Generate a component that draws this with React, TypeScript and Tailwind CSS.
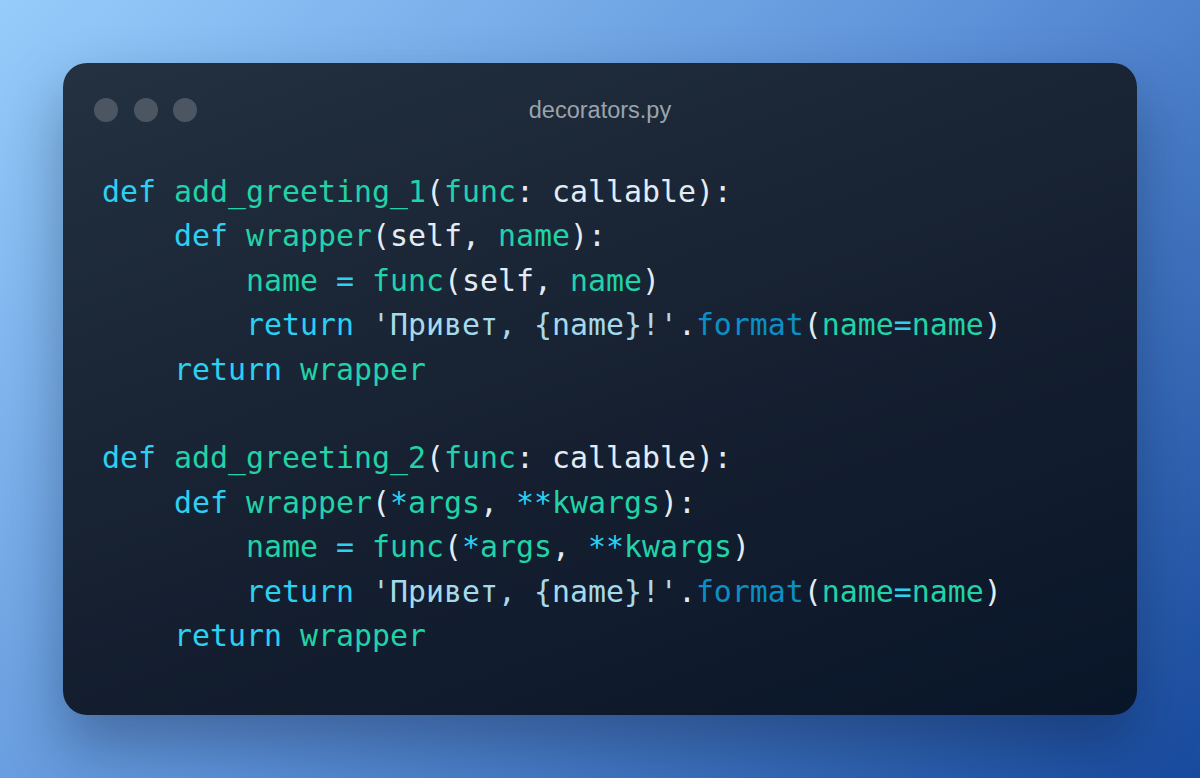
const mono = { fontFamily: "'DejaVu Sans Mono', 'Liberation Mono', monospace" };

type Tok = [string, string];

const K = "text-[#2bd0f2]"; // keyword
const F = "text-[#22d2a8]"; // names
const W = "text-[#e4ebf2]"; // plain
const S = "text-[#a6d9ec]"; // string
const M = "text-[#0c8fc6]"; // method

const lines: Tok[][] = [
  [["def ", K], ["add_greeting_1", F], ["(", W], ["func", F], [": callable):", W]],
  [["    def ", K], ["wrapper", F], ["(self, ", W], ["name", F], ["):", W]],
  [["        name ", F], ["=", K], [" func", F], ["(self, ", W], ["name", F], [")", W]],
  [["        return ", K], ["'Привет, {name}!'", S], [".", W], ["format", M], ["(", W], ["name", F], ["=", K], ["name", F], [")", W]],
  [["    return ", K], ["wrapper", F]],
  [],
  [["def ", K], ["add_greeting_2", F], ["(", W], ["func", F], [": callable):", W]],
  [["    def ", K], ["wrapper", F], ["(", W], ["*", K], ["args", F], [", ", W], ["**", K], ["kwargs", F], ["):", W]],
  [["        name ", F], ["=", K], [" func", F], ["(", W], ["*", K], ["args", F], [", ", W], ["**", K], ["kwargs", F], [")", W]],
  [["        return ", K], ["'Привет, {name}!'", S], [".", W], ["format", M], ["(", W], ["name", F], ["=", K], ["name", F], [")", W]],
  [["    return ", K], ["wrapper", F]],
];

export default function App() {
  return (
    <div className="flex min-h-screen w-full items-center justify-center bg-[linear-gradient(135deg,#96ccfb_0%,#5d92d9_50%,#184a9e_100%)]">
      <div className="w-[1074px] h-[652px] rounded-[24px] bg-[linear-gradient(160deg,#233140_0%,#151f30_55%,#091629_100%)] shadow-[0_30px_60px_rgba(5,20,50,0.35)] pt-[35px] px-[31px]">
        <div className="flex items-center">
          <div className="flex w-[103px] gap-[15.5px]">
            <span className="h-6 w-6 rounded-full bg-[#4c5663]" />
            <span className="h-6 w-6 rounded-full bg-[#4c5663]" />
            <span className="h-6 w-6 rounded-full bg-[#4c5663]" />
          </div>
          <div
            className="flex-1 text-center text-[23.5px] leading-6 text-[#9aa3ad]"
            style={{ fontFamily: "'Liberation Sans', Arial, sans-serif" }}
          >
            decorators.py
          </div>
          <div className="w-[103px]" />
        </div>
        <pre className="mt-[48px] pl-[8px] text-[29.9px] leading-[44.4px]" style={mono}>
          {lines.map((toks, i) => (
            <div key={i} className="h-[44.4px]">
              {toks.map(([t, c], j) => (
                <span key={j} className={c}>
                  {t}
                </span>
              ))}
            </div>
          ))}
        </pre>
      </div>
    </div>
  );
}
